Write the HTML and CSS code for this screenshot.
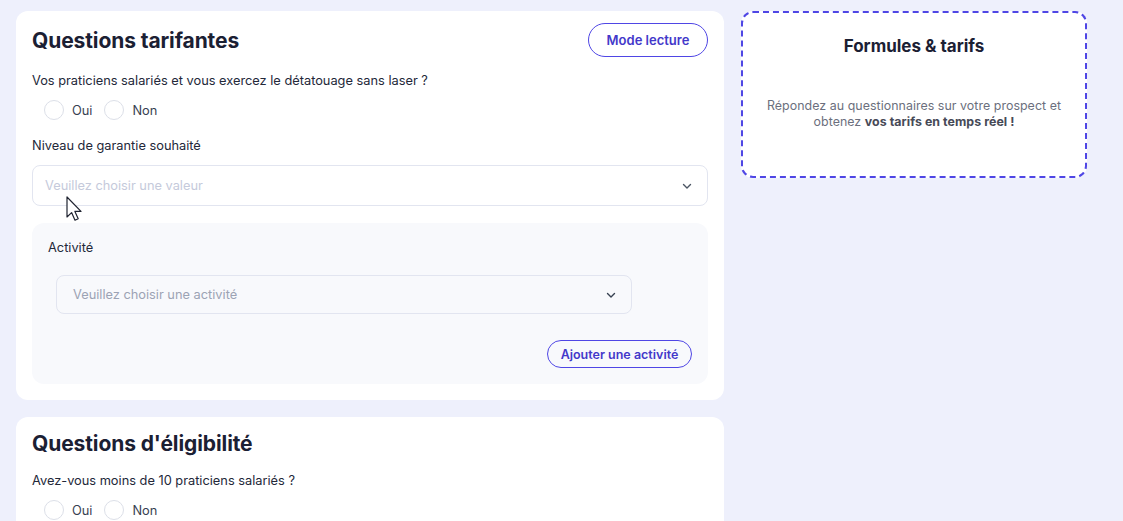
FILE: index.html
```html
<!DOCTYPE html>
<html>
<head>
    <title>Questions tarifantes</title>
    <link rel="stylesheet" href="styles.css">
</head>
<body>
    <div class="page">
        <div class="main-col">
            <section class="card">
                <div class="card-head">
                    <h2 class="card-title">Questions tarifantes</h2>
                    <button type="button" class="btn-outline btn-lg">Mode lecture</button>
                </div>

                <div class="question">
                    <p class="q-label">Vos praticiens salariés et vous exercez le détatouage sans laser ?</p>
                    <div class="radios">
                        <label class="radio"><span class="circle"></span>Oui</label>
                        <label class="radio"><span class="circle"></span>Non</label>
                    </div>
                </div>

                <div class="question">
                    <p class="q-label">Niveau de garantie souhaité</p>
                    <div class="select">
                        <span class="placeholder light">Veuillez choisir une valeur</span>
                        <svg class="chevron" width="12" height="12" viewBox="0 0 12 12"><path d="M2.5 4.5 6 8l3.5-3.5" fill="none" stroke="#4b5563" stroke-width="1.4" stroke-linecap="round" stroke-linejoin="round"/></svg>
                    </div>
                </div>

                <div class="activity-box">
                    <p class="q-label">Activité</p>
                    <div class="select select-sub">
                        <span class="placeholder">Veuillez choisir une activité</span>
                        <svg class="chevron" width="12" height="12" viewBox="0 0 12 12"><path d="M2.5 4.5 6 8l3.5-3.5" fill="none" stroke="#374151" stroke-width="1.4" stroke-linecap="round" stroke-linejoin="round"/></svg>
                    </div>
                    <div class="box-actions">
                        <button type="button" class="btn-outline btn-sm">Ajouter une activité</button>
                    </div>
                </div>
            </section>

            <section class="card card-plain">
                <div class="card-head">
                    <h2 class="card-title">Questions d'éligibilité</h2>
                </div>
                <div class="question">
                    <p class="q-label">Avez-vous moins de 10 praticiens salariés ?</p>
                    <div class="radios">
                        <label class="radio"><span class="circle"></span>Oui</label>
                        <label class="radio"><span class="circle"></span>Non</label>
                    </div>
                </div>
            </section>
        </div>

        <aside class="side-col">
            <div class="tarifs">
                <h3 class="tarifs-title">Formules &amp; tarifs</h3>
                <p class="tarifs-text">Répondez au questionnaires sur votre prospect et obtenez <strong>vos tarifs en temps réel !</strong></p>
            </div>
        </aside>
    </div>

    <svg class="cursor" width="18" height="27" viewBox="0 0 18 27"><path d="M1 1v20l4.6-4.4 3.4 7.6 3.2-1.4-3.3-7.4H15z" fill="#fff" stroke="#1f2330" stroke-width="1.2" stroke-linejoin="round"/></svg>
</body>
</html>
```

FILE: styles.css
```css
* { box-sizing: border-box; }
body { margin: 0; background: #eef0fc; font-family: "Inter", "Noto Sans", sans-serif; color: #1f2433; height: 521px; overflow: hidden; }
p { margin: 0; }

.page { display: flex; gap: 17px; padding: 11px 16px; align-items: flex-start; }
.main-col { width: 708px; display: flex; flex-direction: column; gap: 17px; }
.side-col { width: 346px; }

.card { background: #fff; border-radius: 12px; padding: 12px 16px 16px; }
.card-head { display: flex; justify-content: space-between; align-items: center; height: 34px; margin-bottom: 15px; }
.card-title { margin: 0; font-size: 21px; font-weight: 700; color: #1b2033; letter-spacing: -0.1px; }
.card-plain { padding-top: 9px; }
.card-plain .card-head { margin-bottom: 12px; }

.btn-outline { background: transparent; border: 1px solid #4f46e5; color: #4338ca; font-family: inherit; font-weight: 600; border-radius: 999px; cursor: pointer; }
.btn-lg { height: 34px; width: 120px; font-size: 13px; }
.btn-sm { height: 28px; width: 145px; font-size: 12.5px; }

.question { margin-bottom: 17px; }
.q-label { font-size: 12.8px; line-height: 18px; color: #232839; margin-bottom: 10px; }
.question .q-label + .select { margin-top: 1px; }
.radios { display: flex; gap: 12px; padding-left: 12px; }
.radio { display: flex; align-items: center; gap: 8px; font-size: 12.8px; color: #374151; }
.circle { width: 20px; height: 20px; border: 1px solid #dcdfe8; border-radius: 50%; background: #fff; }

.select { display: flex; justify-content: space-between; align-items: center; height: 41px; border: 1px solid #e2e5f0; border-radius: 8px; padding: 0 14px 0 12px; }
.placeholder { font-size: 12.8px; color: #9ca3b4; }
.placeholder.light { color: #c5cadb; }
.chevron { display: block; }

.activity-box { background: #f8f9fc; border-radius: 12px; padding: 16px; margin-top: 0; }
.activity-box .q-label { margin-bottom: 18px; }
.select-sub { width: 576px; height: 39px; margin-left: 8px; padding-left: 16px; }
.box-actions { display: flex; justify-content: flex-end; margin-top: 26px; }

.tarifs { border: 2px dashed #4f46e5; border-radius: 12px; background: #fff; height: 167px; padding: 22px 18px; text-align: center; }
.tarifs-title { margin: 0 0 41px; font-size: 17px; font-weight: 700; line-height: 22px; color: #1b2033; }
.tarifs-text { font-size: 12.4px; line-height: 16px; letter-spacing: 0.05px; color: #6b6f7d; }
.tarifs-text strong { color: #474a57; }

.cursor { position: absolute; left: 66px; top: 196px; }
```
